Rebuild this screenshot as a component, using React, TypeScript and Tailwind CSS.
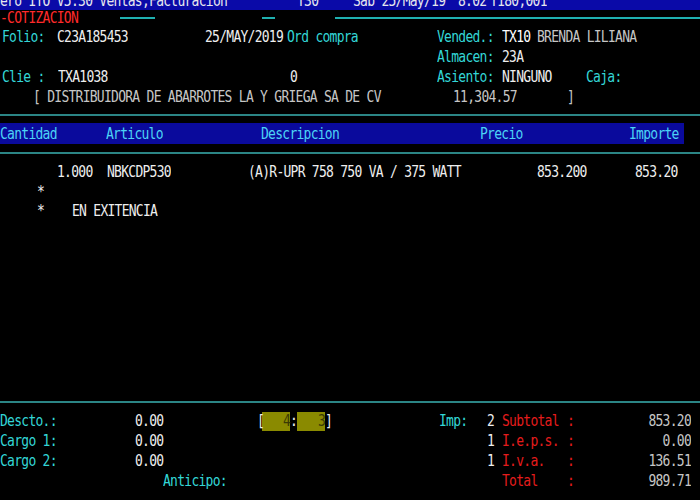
import type { ReactNode } from "react";
import clsx from "clsx";

type CellProps = {
  w?: string;
  className?: string;
  children?: ReactNode;
};

// one text cell of the terminal row; glyphs stretched a bit to look like the VGA font
function Cell({ w, className, children }: CellProps) {
  return <div className={clsx("shrink-0 scale-y-[1.18] whitespace-pre", w, className)}>{children}</div>;
}

function Rule({ className }: { className?: string }) {
  return <div className={clsx("h-[2px] bg-[#2b8585]", className)} />;
}

const cyan = "text-[#33d6d6]";
const white = "text-[#eeeeee]";
const gray = "text-[#c6c6c6]";
const red = "text-[#e41c1c]";

export default function App() {
  return (
    <div className="flex h-[500px] w-[700px] flex-col overflow-hidden bg-black font-['DejaVu_Sans_Mono',monospace] text-[13px] tracking-[-0.73px]">
      {/* title bar, only the lower half is on screen */}
      <div className="h-[10px] shrink-0 overflow-hidden bg-[#0a0aa8]">
        <div className="-mt-[9px] flex h-[19px] items-center text-[#e6e6ee]">
          <Cell w="w-[297px]">ero ITO V5.30 Ventas,Facturacion</Cell>
          <Cell w="w-[56px]">T30</Cell>
          <Cell w="w-[105px]">Sab 25/May/19</Cell>
          <Cell w="w-[32px]">8:02</Cell>
          <Cell>T180,001</Cell>
        </div>
      </div>

      <div className="flex h-[16px] shrink-0 items-center">
        <Cell w="w-[120px]" className="text-[#ff2a2a]">-COTIZACION</Cell>
        <div className="h-[2px] w-[35px] bg-[#1fb0b0]" />
        <div className="w-[107px]" />
        <div className="h-[2px] w-[13px] bg-[#1fb0b0]" />
        <div className="w-[60px]" />
        <div className="h-[2px] flex-1 bg-[#1fb0b0]" />
      </div>

      <div className="flex h-[21px] shrink-0 items-center pl-[2px]">
        <Cell w="w-[55px]" className={cyan}>Folio:</Cell>
        <Cell w="w-[148px]" className={white}>C23A185453</Cell>
        <Cell w="w-[82px]" className={white}>25/MAY/2019</Cell>
        <Cell w="w-[150px]" className={cyan}>Ord compra</Cell>
        <Cell w="w-[65px]" className={cyan}>Vended.:</Cell>
        <Cell w="w-[35px]" className="text-white">TX10</Cell>
        <Cell className={gray}>BRENDA LILIANA</Cell>
      </div>

      <div className="flex h-[20px] shrink-0 items-center pl-[2px]">
        <div className="w-[435px] shrink-0" />
        <Cell w="w-[65px]" className={cyan}>Almacen:</Cell>
        <Cell className={white}>23A</Cell>
      </div>

      <div className="flex h-[20px] shrink-0 items-center pl-[2px]">
        <Cell w="w-[56px]" className={cyan}>Clie :</Cell>
        <Cell w="w-[232px]" className={white}>TXA1038</Cell>
        <Cell w="w-[147px]" className={white}>0</Cell>
        <Cell w="w-[65px]" className={cyan}>Asiento:</Cell>
        <Cell w="w-[84px]" className={white}>NINGUNO</Cell>
        <Cell className={cyan}>Caja:</Cell>
      </div>

      <div className="flex h-[20px] shrink-0 items-center">
        <div className="w-[33px] shrink-0" />
        <Cell w="w-[420px]" className={gray}>[ DISTRIBUIDORA DE ABARROTES LA Y GRIEGA SA DE CV</Cell>
        <Cell w="w-[114px]" className={gray}>11,304.57</Cell>
        <Cell className={gray}>]</Cell>
      </div>

      <div className="flex h-[16px] shrink-0 flex-col justify-center">
        <Rule />
      </div>

      {/* column headings */}
      <div className="flex h-[21px] w-[684px] shrink-0 items-center bg-[#0a0a9c] text-[#4cd3f5]">
        <Cell w="w-[106px]">Cantidad</Cell>
        <Cell w="w-[155px]">Articulo</Cell>
        <Cell w="w-[219px]">Descripcion</Cell>
        <Cell w="w-[149px]">Precio</Cell>
        <Cell>Importe</Cell>
      </div>

      <div className="flex h-[18px] shrink-0 flex-col justify-center">
        <Rule />
      </div>

      <div className={clsx("flex h-[20px] shrink-0 items-center", white)}>
        <div className="w-[57px] shrink-0" />
        <Cell w="w-[50px]">1.000</Cell>
        <Cell w="w-[141px]">NBKCDP530</Cell>
        <Cell w="w-[289px]">(A)R-UPR 758 750 VA / 375 WATT</Cell>
        <Cell w="w-[98px]">853.200</Cell>
        <Cell>853.20</Cell>
      </div>

      <div className={clsx("flex h-[19px] shrink-0 items-center", white)}>
        <div className="w-[37px] shrink-0" />
        <Cell>*</Cell>
      </div>

      <div className={clsx("flex h-[20px] shrink-0 items-center", white)}>
        <div className="w-[37px] shrink-0" />
        <Cell w="w-[35px]">*</Cell>
        <Cell>EN EXITENCIA</Cell>
      </div>

      <div className="flex-1" />

      {/* totals */}
      <Rule className="shrink-0" />
      <div className="flex shrink-0 flex-col pt-[8px] pb-[9px]">
        <div className="flex h-[20px] items-center">
          <Cell w="w-[135px]" className={cyan}>Descto.:</Cell>
          <Cell w="w-[122px]" className={white}>0.00</Cell>
          <Cell w="w-[5px]" className={white}>[</Cell>
          <div className="flex h-[19px] w-[28px] shrink-0 items-center justify-end bg-[#8a8a00]">
            <Cell className="text-[#3a3a04]">4</Cell>
          </div>
          <Cell w="w-[7px]" className={white}>:</Cell>
          <div className="flex h-[19px] w-[28px] shrink-0 items-center justify-end bg-[#8a8a00]">
            <Cell className="text-[#3a3a04]">3</Cell>
          </div>
          <Cell w="w-[114px]" className={white}>]</Cell>
          <Cell w="w-[48px]" className={cyan}>Imp:</Cell>
          <Cell w="w-[15px]" className={white}>2</Cell>
          <Cell w="w-[65px]" className={red}>Subtotal</Cell>
          <Cell className={red}>:</Cell>
          <Cell w="flex-1" className={clsx("pr-[9px] text-right", gray)}>853.20</Cell>
        </div>
        <div className="flex h-[20px] items-center">
          <Cell w="w-[135px]" className={cyan}>Cargo 1:</Cell>
          <Cell w="w-[352px]" className={white}>0.00</Cell>
          <Cell w="w-[15px]" className={white}>1</Cell>
          <Cell w="w-[65px]" className={red}>I.e.p.s.</Cell>
          <Cell className={red}>:</Cell>
          <Cell w="flex-1" className={clsx("pr-[9px] text-right", gray)}>0.00</Cell>
        </div>
        <div className="flex h-[20px] items-center">
          <Cell w="w-[135px]" className={cyan}>Cargo 2:</Cell>
          <Cell w="w-[352px]" className={white}>0.00</Cell>
          <Cell w="w-[15px]" className={white}>1</Cell>
          <Cell w="w-[65px]" className={red}>I.v.a.</Cell>
          <Cell className={red}>:</Cell>
          <Cell w="flex-1" className={clsx("pr-[9px] text-right", gray)}>136.51</Cell>
        </div>
        <div className="flex h-[20px] items-center">
          <div className="w-[163px] shrink-0" />
          <Cell w="w-[339px]" className={cyan}>Anticipo:</Cell>
          <Cell w="w-[65px]" className={red}>Total</Cell>
          <Cell className={red}>:</Cell>
          <Cell w="flex-1" className={clsx("pr-[9px] text-right", gray)}>989.71</Cell>
        </div>
      </div>
    </div>
  );
}
